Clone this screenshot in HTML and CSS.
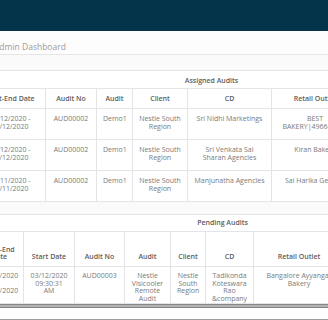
FILE: index.html
```html
<!DOCTYPE html>
<html>
<head>
    <title>Admin Dashboard</title>
    <link rel="stylesheet" href="styles.css">
</head>
<body>
    <div class="topbar"></div>
    <div class="content">
        <div class="crumb">Admin Dashboard</div>

        <div class="panel">
            <table class="grid assigned">
                <colgroup>
                    <col style="width: 71px">
                    <col style="width: 51px">
                    <col style="width: 36px">
                    <col style="width: 55px">
                    <col style="width: 84px">
                    <col style="width: 87px">
                    <col style="width: 90px">
                </colgroup>
                <tr class="title"><td colspan="7">Assigned Audits</td></tr>
                <tr class="head">
                    <th>Start-End Date</th>
                    <th>Audit No</th>
                    <th>Audit</th>
                    <th>Client</th>
                    <th>CD</th>
                    <th>Retail Outlet</th>
                    <th>Action</th>
                </tr>
                <tr class="row">
                    <td>01/12/2020 - 31/12/2020</td>
                    <td>AUD00002</td>
                    <td>Demo1</td>
                    <td>Nestle South Region</td>
                    <td>Sri Nidhi Marketings</td>
                    <td>BEST BAKERY|496645211</td>
                    <td></td>
                </tr>
                <tr class="row">
                    <td>01/12/2020 - 31/12/2020</td>
                    <td>AUD00002</td>
                    <td>Demo1</td>
                    <td>Nestle South Region</td>
                    <td>Sri Venkata Sai Sharan Agencies</td>
                    <td>Kiran Bakery</td>
                    <td></td>
                </tr>
                <tr class="row">
                    <td>01/11/2020 - 30/11/2020</td>
                    <td>AUD00002</td>
                    <td>Demo1</td>
                    <td>Nestle South Region</td>
                    <td>Manjunatha Agencies</td>
                    <td>Sai Harika General</td>
                    <td></td>
                </tr>
            </table>
        </div>

        <div class="panel pending-panel">
            <table class="grid pending">
                <colgroup>
                    <col style="width: 49px">
                    <col style="width: 51px">
                    <col style="width: 50px">
                    <col style="width: 46px">
                    <col style="width: 35px">
                    <col style="width: 48px">
                    <col style="width: 91px">
                    <col style="width: 126px">
                </colgroup>
                <tr class="title"><td colspan="8">Pending Audits</td></tr>
                <tr class="head">
                    <th>Start-End Date</th>
                    <th>Start Date</th>
                    <th>Audit No</th>
                    <th>Audit</th>
                    <th>Client</th>
                    <th>CD</th>
                    <th>Retail Outlet</th>
                    <th>Action</th>
                </tr>
                <tr class="row">
                    <td>01/12/2020 - 31/12/2020</td>
                    <td>03/12/2020 09:30:31 AM</td>
                    <td>AUD00003</td>
                    <td>Nestle Visicooler Remote Audit</td>
                    <td>Nestle South Region</td>
                    <td>Tadikonda Koteswara Rao &amp;company</td>
                    <td>Bangalore Ayyangar Bakery</td>
                    <td></td>
                </tr>
            </table>
            <div class="scroll-edge"></div>
            <div class="footer-strip"></div>
        </div>
    </div>
</body>
</html>
```

FILE: styles.css
```css
body { margin: 0; font-family: "Open Sans", Arial, sans-serif; background: #fafafa; overflow: hidden; }
.topbar { height: 31px; background: #04344a; }
.content { margin-left: -26px; }
.crumb { height: 24px; box-sizing: border-box; padding: 10px 0 0 20px; line-height: 12px; font-size: 8.5px; color: #9b9b9b; border-bottom: 1px solid #e6e6e6; background: #fdfdfd; }
.panel { padding-top: 15px; }
.pending-panel { padding-top: 12px; }

.grid { border-collapse: collapse; table-layout: fixed; background: #fff; font-size: 7px; line-height: 7.6px; color: #7a7a7a; }
.assigned { width: 474px; }
.pending { width: 496px; }
.grid td, .grid th { border: 1px solid #e2e4e7; text-align: center; padding: 6px 6px 0; vertical-align: top; }
.grid th { font-weight: 600; color: #5d5d5d; vertical-align: bottom; padding-bottom: 5px; }

.title td { border-left: none; border-right: none; font-weight: 600; color: #5d5d5d; vertical-align: middle; padding: 2px 0 0; height: 15px; }
.assigned .head th { height: 8px; }
.assigned .row td { height: 24px; }
.pending .title td { height: 16px; padding-top: 0; }
.pending .head th { height: 23px; }
.pending .row td { height: 31px; padding-top: 5px; }

.scroll-edge { width: 100%; height: 2px; background: #b2b2b2; border-top: 1px solid #878787; border-bottom: 1px solid #878787; }
.footer-strip { height: 11px; background: #fff; border-bottom: 1px solid #a0a0a0; }
```
